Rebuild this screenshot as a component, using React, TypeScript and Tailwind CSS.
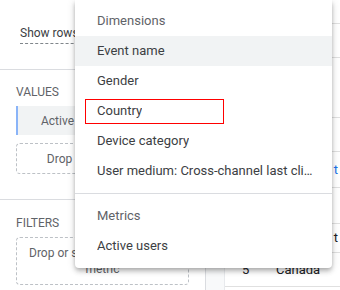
import React from "react";

const font = { fontFamily: "Roboto, 'Noto Sans', Arial, sans-serif" };

const dimensions = ["Event name", "Gender", "Country", "Device category", "User medium: Cross-channel last click"];

function MenuItem({ label, highlighted, boxed }: { label: string; highlighted?: boolean; boxed?: boolean }) {
  return (
    <div className={`relative h-[30px] flex items-center pl-[22px] pr-[16px] text-[13px] text-[#3c4043] ${highlighted ? "bg-[#f1f3f4]" : ""}`}>
      <span className="truncate">{label}</span>
      {/* red highlight box drawn over the Country item */}
      {boxed && <div className="absolute left-[10px] top-[3px] w-[139px] h-[25px] border border-[#ff0000]" />}
    </div>
  );
}

export default function App() {
  // table rows visible beside the menu: heights match the grid lines
  const rows = [24, 34, 60, 34, 36, 36, 29, 34];

  return (
    <div className="relative w-[340px] h-[290px] overflow-hidden bg-white flex" style={font}>
      {/* Left settings panel */}
      <div className="w-[206px] shrink-0 border-r border-[#dadce0] flex flex-col">
        <div className="h-[70px] border-b border-[#dadce0] pl-[20px] pt-[26px]">
          <div className="w-[160px] h-[18px] border-b border-dashed border-[#80868b] text-[12px] text-[#3c4043] leading-[14px]">
            Show rows
          </div>
        </div>
        <div className="h-[130px] border-b border-[#dadce0] px-[16px] pt-[15px]">
          <div className="text-[12px] text-[#5f6368] leading-[14px]">VALUES</div>
          <div className="mt-[7px] h-[29px] bg-[#f1f3f4] border-l-2 border-[#8ab4f8] flex items-center pl-[23px] text-[12px] text-[#5f6368]">
            Active users
          </div>
          <div className="mt-[8px] h-[31px] border border-dashed border-[#bdc1c6] rounded-[4px] flex items-center justify-center text-[12px] text-[#5f6368]">
            Drop or select metric
          </div>
        </div>
        <div className="flex-1 px-[16px] pt-[16px]">
          <div className="text-[12px] text-[#5f6368] leading-[14px]">FILTERS</div>
          <div className="mt-[7px] h-[48px] border border-dashed border-[#bdc1c6] rounded-[4px] flex items-center justify-center text-center text-[12px] leading-[16px] text-[#5f6368] px-[8px]">
            Drop or select dimension or metric
          </div>
        </div>
      </div>

      {/* Gutter strip */}
      <div className="w-[19px] shrink-0 bg-[#f8f9fa] border-r border-[#e8eaed]" />

      {/* Table */}
      <div className="flex-1 flex flex-col">
        {rows.map((h, i) => (
          <div key={i} className="border-b border-[#e0e0e0] flex items-center text-[13px] text-[#202124]" style={{ height: h }}>
            {i === 4 && <span className="ml-auto mr-[2px] text-[#1a73e8]">t</span>}
            {i === 6 && <span className="ml-auto mr-[2px]">t</span>}
            {i === 7 && (
              <>
                <span className="ml-[17px] w-[34px]">5</span>
                <span>Canada</span>
              </>
            )}
          </div>
        ))}
      </div>

      {/* Field picker menu */}
      <div className="absolute left-[75px] top-0 w-[257px] bg-white rounded-b-[4px] pt-[6px] pb-[7px] shadow-[0_2px_4px_-1px_rgba(0,0,0,0.2),0_4px_5px_0_rgba(0,0,0,0.14),0_1px_10px_0_rgba(0,0,0,0.12)]">
        <div className="h-[30px] flex items-center pl-[22px] text-[13px] text-[#5f6368]">Dimensions</div>
        {dimensions.map((d, i) => (
          <MenuItem key={d} label={d} highlighted={i === 0} boxed={d === "Country"} />
        ))}
        <div className="my-[7px] border-t border-[#dadce0]" />
        <div className="h-[30px] flex items-center pl-[22px] text-[13px] text-[#5f6368]">Metrics</div>
        <MenuItem label="Active users" />
      </div>
    </div>
  );
}
